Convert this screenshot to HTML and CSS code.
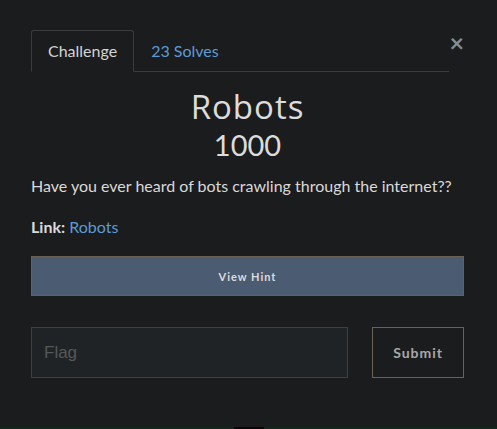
FILE: index.html
```html
<!DOCTYPE html>
<html>
<head>
<meta charset="utf-8">
<link rel="stylesheet" href="styles.css">
</head>
<body>
<div class="modal">
  <div class="top">
    <ul class="tabs">
      <li class="tab active">Challenge</li>
      <li class="tab link">23 Solves</li>
    </ul>
    <button class="close">×</button>
  </div>
  <h2 class="title">Robots</h2>
  <h3 class="value">1000</h3>
  <p class="desc">Have you ever heard of bots crawling through the internet??</p>
  <p class="linkline"><b>Link:</b> <a class="lnk">Robots</a></p>
  <button class="hint">View Hint</button>
  <div class="form">
    <input class="flag" placeholder="Flag">
    <button class="submit">Submit</button>
  </div>
</div>
<div class="bottom"><span class="gap"></span></div>
</body>
</html>
```
FILE: styles.css
```css
html, body {
  margin: 0;
  padding: 0;
  background: #1b1c1e;
  height: 100%;
}
body {
  font-family: Lato, "Noto Sans", sans-serif;
  color: #d9d9d9;
  display: flex;
  flex-direction: column;
}
.modal {
  flex: 1;
  padding: 30px 33px 0 31px;
}
.top {
  display: flex;
  align-items: flex-start;
}
.tabs {
  list-style: none;
  margin: 0;
  padding: 0;
  display: flex;
  width: 420px;
  border-bottom: 1px solid #3a3b3d;
  height: 41px;
}
.tab {
  font-size: 16px;
  padding: 0 16px;
  line-height: 40px;
  border: 1px solid transparent;
  border-radius: 3px 3px 0 0;
  margin-bottom: -1px;
}
.tab.active {
  border-color: #3a3b3d;
  border-bottom-color: #1b1c1e;
  color: #d4d4d4;
}
.tab.link { color: #5b9bd5; }
.close {
  margin-left: auto;
  background: none;
  border: 0;
  padding: 0;
  color: #8a8b8d;
  font-family: Lato, sans-serif;
  font-size: 25px;
  font-weight: 700;
  line-height: 20px;
  margin-top: 2px;
  margin-right: 0;
}
.title {
  margin: 15px 0 0;
  text-align: center;
  font-family: "Open Sans", Lato, sans-serif;
  font-weight: 400;
  font-size: 33px;
  letter-spacing: 1px;
  line-height: 40px;
  color: #dcdcdc;
}
.value {
  margin: 0;
  text-align: center;
  font-weight: 400;
  font-size: 29px;
  line-height: 36px;
  color: #dcdcdc;
}
.desc {
  margin: 12px 0 0;
  font-size: 16px;
  line-height: 22px;
}
.linkline {
  margin: 19px 0 0;
  font-size: 16px;
  line-height: 22px;
}
.linkline b { font-weight: 700; }
.lnk { color: #5b9bd5; }
.hint {
  display: block;
  width: 100%;
  margin-top: 18px;
  height: 40px;
  background: #4a5b72;
  border: 1px solid #6b5f50;
  color: #dcdcdc;
  font-family: Lato, sans-serif;
  font-weight: 700;
  font-size: 11px;
  letter-spacing: 1px;
}
.form {
  display: flex;
  margin-top: 31px;
  gap: 24px;
}
.flag {
  width: 318px;
  height: 51px;
  box-sizing: border-box;
  background: #202325;
  border: 1px solid #3d3f40;
  padding: 0 12px;
  font-family: "Liberation Sans", Arial, sans-serif;
  font-size: 17px;
  color: #ccc;
  outline: none;
}
.flag::placeholder { color: #55585a; }
.submit {
  width: 92px;
  height: 51px;
  box-sizing: border-box;
  background: transparent;
  border: 1px solid #6b6257;
  color: #a8a8a8;
  font-family: Lato, sans-serif;
  font-weight: 700;
  font-size: 14px;
  letter-spacing: 1px;
  margin-left: auto;
}
.bottom {
  height: 2px;
  background: #0f2a1b;
  position: relative;
}
.gap {
  position: absolute;
  left: 234px;
  width: 30px;
  top: 0;
  height: 2px;
  background: #070707;
}
```
